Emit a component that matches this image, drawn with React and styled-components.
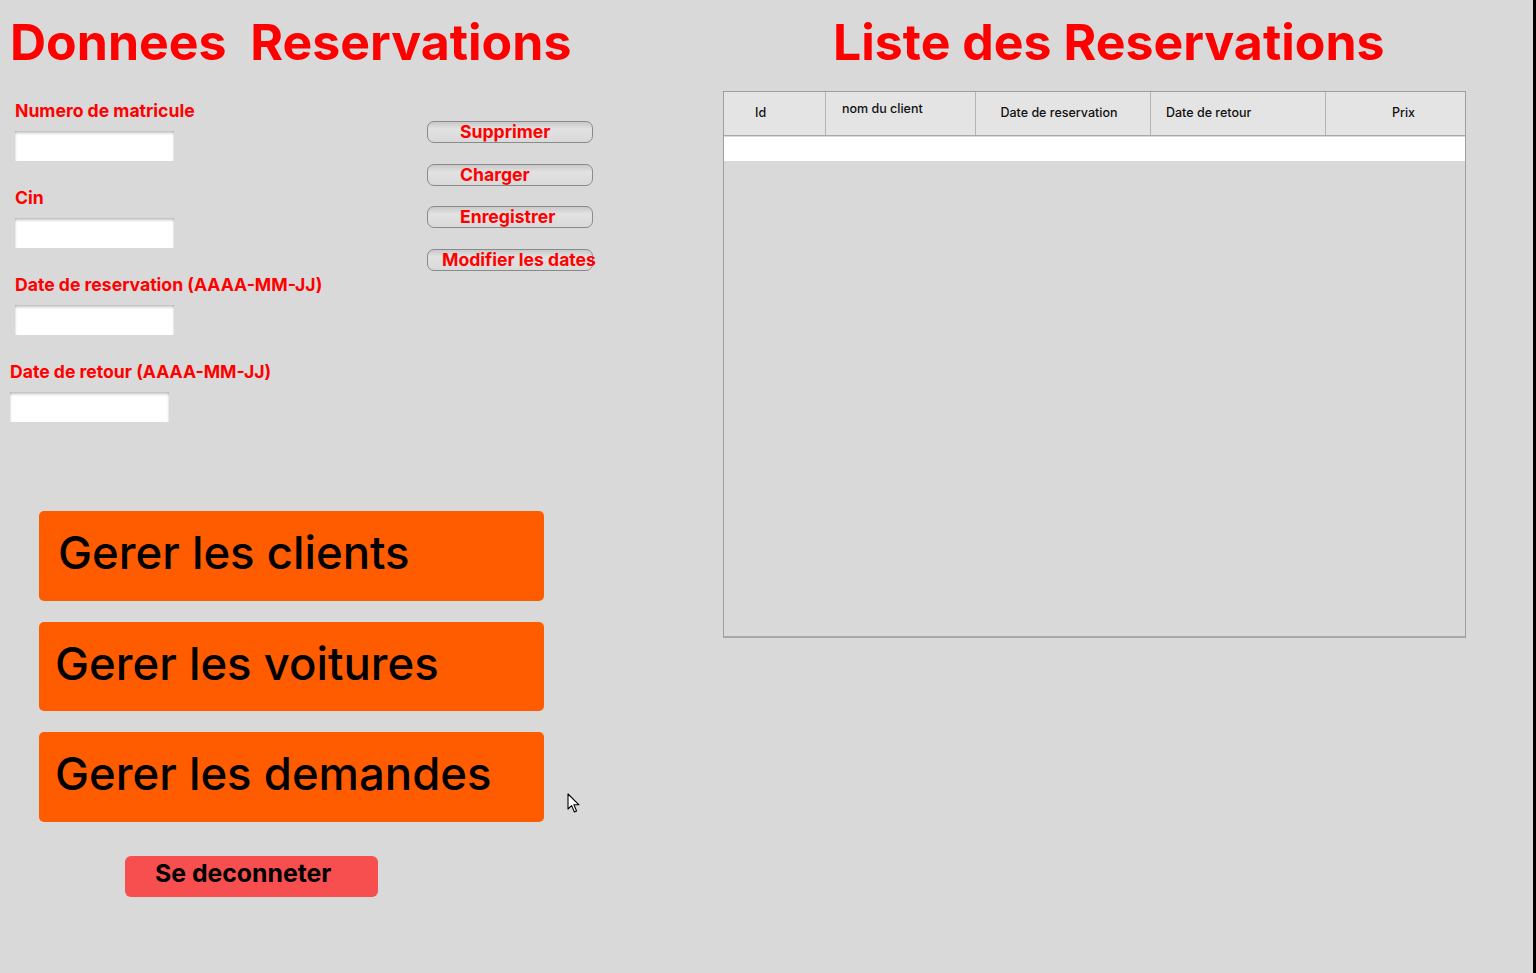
import styled, { createGlobalStyle } from 'styled-components';

const GlobalStyle = createGlobalStyle`
  html, body {
    margin: 0;
    padding: 0;
    background: #d9d9d9;
  }
  body {
    font-family: Inter, "Liberation Sans", sans-serif;
  }
`;

const Page = styled.div`
  position: relative;
  display: flex;
  flex-direction: row;
  width: 1536px;
  height: 973px;
  background: #d9d9d9;
  overflow: hidden;
`;

const LeftPanel = styled.div`
  display: flex;
  flex-direction: column;
  width: 712px;
  padding: 12px 0 0 10px;
  box-sizing: border-box;
`;

const RightPanel = styled.div`
  display: flex;
  flex-direction: column;
  flex: 1;
  padding: 12px 0 0 10px;
  box-sizing: border-box;
`;

const EdgeStrip = styled.div`
  width: 3px;
  background: #000;
`;

const Title = styled.h1`
  margin: 0 0 0 ${(p) => p.$indent || 0}px;
  font-size: 50px;
  line-height: 60px;
  font-weight: 700;
  color: #ff0000;
  white-space: pre;
`;

const FormRow = styled.div`
  display: flex;
  flex-direction: row;
  margin-top: 29px;
`;

const Fields = styled.div`
  display: flex;
  flex-direction: column;
  width: 417px;
  gap: 27px;
`;

const Field = styled.div`
  display: flex;
  flex-direction: column;
  margin-left: ${(p) => p.$shift}px;
`;

const Label = styled.label`
  font-size: 17.6px;
  line-height: 20px;
  font-weight: 700;
  color: #ff0000;
  margin-bottom: 10px;
  white-space: nowrap;
`;

const Input = styled.input`
  width: 159px;
  height: 30px;
  box-sizing: border-box;
  border: none;
  outline: none;
  background: #fff;
  box-shadow: inset 0 4px 3px -2px rgba(0, 0, 0, 0.25),
    inset 2px 0 2px -1px rgba(0, 0, 0, 0.1),
    inset -2px 0 2px -1px rgba(0, 0, 0, 0.1);
`;

const Actions = styled.div`
  display: flex;
  flex-direction: column;
  margin-top: 20px;
  gap: 20.5px;
`;

const ActionButton = styled.button`
  display: block;
  width: 166px;
  height: 22px;
  box-sizing: border-box;
  padding: 0 0 1px ${(p) => p.$indent}px;
  border: 1.5px solid #8a8a8a;
  border-radius: 7px;
  background: linear-gradient(#c9c9c9, #e2e2e2 35%, #d9d9d9);
  font-family: Inter, "Liberation Sans", sans-serif;
  font-size: 17.6px;
  line-height: 19px;
  font-weight: 700;
  color: #ff0000;
  text-align: left;
  white-space: nowrap;
  overflow: visible;
  cursor: pointer;
`;

const NavList = styled.div`
  display: flex;
  flex-direction: column;
  gap: 21px;
  margin: 89px 0 0 29px;
`;

const NavButton = styled.button`
  width: 505px;
  height: 89.5px;
  box-sizing: border-box;
  padding: 13px 0 0 ${(p) => p.$indent}px;
  border: none;
  border-radius: 5px;
  background: #ff5c00;
  font-family: Inter, "Liberation Sans", sans-serif;
  font-size: 45.5px;
  line-height: 57px;
  font-weight: 500;
  color: #000;
  text-align: left;
  display: flex;
  align-items: flex-start;
  cursor: pointer;
`;

const LogoutButton = styled.button`
  width: 253px;
  height: 41px;
  margin: 34px 0 0 115px;
  box-sizing: border-box;
  padding: 3px 0 0 30px;
  border: none;
  border-radius: 6px;
  background: #f74f4f;
  font-family: Inter, "Liberation Sans", sans-serif;
  font-size: 24.8px;
  line-height: 29px;
  font-weight: 700;
  color: #000;
  text-align: left;
  display: flex;
  align-items: flex-start;
  cursor: pointer;
`;

const TableFrame = styled.div`
  display: flex;
  flex-direction: column;
  width: 743px;
  height: 547px;
  margin: 19px 0 0 1px;
  box-sizing: border-box;
  border: 1px solid #9e9e9e;
  border-bottom: 2px solid #a8a8a8;
  background: #d9d9d9;
`;

const HeaderRow = styled.div`
  display: grid;
  grid-template-columns: 101px 150px 175px 175px 1fr;
  height: 43px;
  background: #e4e4e4;
  border-bottom: 1px solid #a8a8a8;
`;

const HeaderCell = styled.div`
  display: flex;
  align-items: ${(p) => (p.$top ? 'flex-start' : 'center')};
  justify-content: ${(p) => p.$justify || 'flex-start'};
  padding: ${(p) => (p.$top ? '9px' : '0')} ${(p) => p.$padRight || 0}px 3px
    ${(p) => p.$padLeft || 0}px;
  border-left: ${(p) => (p.$first ? 'none' : '1px solid #b4b4b4')};
  font-size: 12.5px;
  font-weight: 500;
  color: #111;
  white-space: nowrap;
`;

const BlankRow = styled.div`
  height: 24px;
  margin-top: 1px;
  background: #fff;
`;

const Cursor = styled.svg`
  position: absolute;
  left: 567px;
  top: 793px;
  width: 14px;
  height: 21px;
`;

const fields = [
  { label: 'Numero de matricule', shift: 5 },
  { label: 'Cin', shift: 5 },
  { label: 'Date de reservation (AAAA-MM-JJ)', shift: 5 },
  { label: 'Date de retour (AAAA-MM-JJ)', shift: 0 },
];

const actions = [
  { text: 'Supprimer', indent: 32 },
  { text: 'Charger', indent: 32 },
  { text: 'Enregistrer', indent: 32 },
  { text: 'Modifier les dates', indent: 14 },
];

const App = () => {
  return (
    <Page>
      <GlobalStyle />
      <LeftPanel>
        <Title>{'Donnees  Reservations'}</Title>
        <FormRow>
          <Fields>
            {fields.map((f) => (
              <Field key={f.label} $shift={f.shift}>
                <Label>{f.label}</Label>
                <Input type="text" />
              </Field>
            ))}
          </Fields>
          <Actions>
            {actions.map((a) => (
              <ActionButton key={a.text} $indent={a.indent}>
                {a.text}
              </ActionButton>
            ))}
          </Actions>
        </FormRow>
        <NavList>
          <NavButton $indent={19}>Gerer les clients</NavButton>
          <NavButton $indent={16}>Gerer les voitures</NavButton>
          <NavButton $indent={16}>Gerer les demandes</NavButton>
        </NavList>
        <LogoutButton>Se deconneter</LogoutButton>
      </LeftPanel>
      <RightPanel>
        <Title $indent={111}>Liste des Reservations</Title>
        <TableFrame>
          <HeaderRow>
            <HeaderCell $first $padLeft={31}>Id</HeaderCell>
            <HeaderCell $top $padLeft={16}>nom du client</HeaderCell>
            <HeaderCell $justify="center" $padRight={8}>Date de reservation</HeaderCell>
            <HeaderCell $padLeft={15}>Date de retour</HeaderCell>
            <HeaderCell $justify="center" $padLeft={16}>Prix</HeaderCell>
          </HeaderRow>
          <BlankRow />
        </TableFrame>
      </RightPanel>
      <EdgeStrip />
      <Cursor viewBox="0 0 14 21">
        <path
          d="M1 1 L1 16 L4.6 12.6 L7.4 19 L9.6 18 L6.9 11.8 L12 11.8 Z"
          fill="#fff"
          stroke="#000"
          strokeWidth="1.1"
          strokeLinejoin="round"
        />
      </Cursor>
    </Page>
  );
};

export default App;
